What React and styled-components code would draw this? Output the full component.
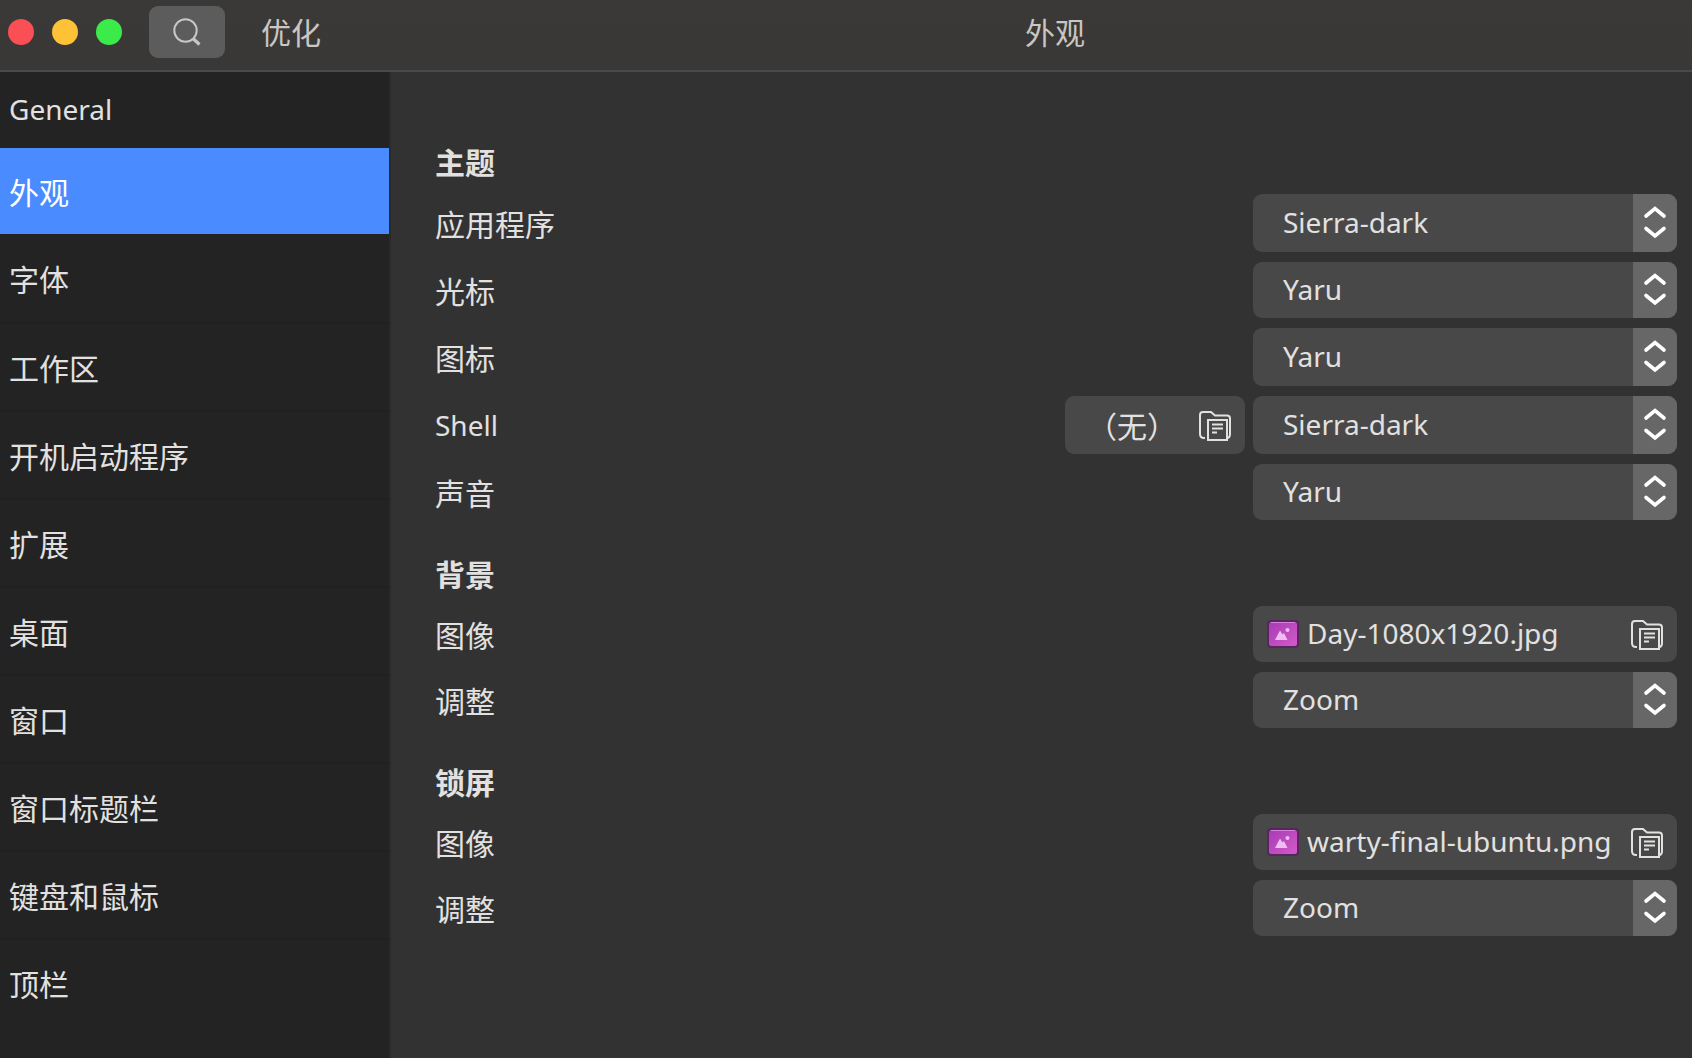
import React, { useId } from "react";
import styled, { createGlobalStyle } from "styled-components";

const latin = '"Noto Sans", "Noto Sans CJK SC", sans-serif';
const cjk = '"Noto Sans CJK SC", "Noto Sans", sans-serif';

const GlobalStyle = createGlobalStyle`
  *, *::before, *::after { box-sizing: border-box; }
  html, body { margin: 0; background: #323232; }
  body { color: #e2e1e0; font-family: ${cjk}; font-size: 30px; line-height: 46px; }
  button, select { font: inherit; color: inherit; margin: 0; border: 0; }
`;

const Window = styled.div`
  min-height: 100vh;
  display: flex;
  flex-direction: column;
`;

const HeaderBar = styled.header`
  display: flex;
  height: 72px;
  padding-bottom: 6px;
  border-bottom: 2px solid #494949;
  background: linear-gradient(#3b3938, #393837);
  color: #c9c6c3;
`;

const HeaderStart = styled.div`
  flex: none;
  width: 418px;
  display: flex;
  align-items: center;
  padding-left: 8px;
`;

const WindowControls = styled.div`
  display: flex;
  gap: 18px;
  margin-right: 27px;
`;

const Dot = styled.button`
  width: 26px;
  height: 26px;
  padding: 0;
  border-radius: 50%;
  background: ${(p) => p.$color};
`;

const SearchButton = styled.button`
  width: 76px;
  height: 52px;
  margin-right: 36px;
  padding: 0;
  display: grid;
  place-items: center;
  border-radius: 9px;
  background: #5d5c5c;
`;

const HeaderText = styled.h1`
  margin: 0;
  padding-bottom: 2px;
  font-size: 30px;
  font-weight: 400;
`;

const HeaderTitle = styled(HeaderText)`
  flex: 1;
  display: flex;
  align-items: center;
  justify-content: center;
`;

const Body = styled.div`
  flex: 1;
  display: flex;
`;

const Sidebar = styled.nav`
  flex: none;
  width: 391px;
  border-right: 2px solid #2a2a2a;
  background: #232323;
`;

const NavList = styled.ul`
  list-style: none;
  margin: 0;
  padding: 0;
`;

const NavLink = styled.a`
  display: flex;
  align-items: center;
  height: ${(p) => p.$height}px;
  padding: 0 9px ${(p) => (p.$latin ? 2 : 0)}px;
  border-top: ${(p) => (p.$divided ? "2px solid #202020" : "0")};
  background: ${(p) => (p.$active ? "#4a8cff" : "transparent")};
  color: ${(p) => (p.$active ? "#ffffff" : "inherit")};
  font-family: ${(p) => (p.$latin ? latin : cjk)};
  font-size: ${(p) => (p.$latin ? 28 : 30)}px;
  text-decoration: none;
`;

const Content = styled.main`
  flex: 1;
  min-width: 0;
  display: flex;
  flex-direction: column;
  gap: 30px;
  padding: 66px 15px 40px 44px;
`;

const GroupTitle = styled.h2`
  margin: 0 0 10px;
  font-size: 30px;
  font-weight: 700;
`;

const Rows = styled.div`
  display: grid;
  gap: 10px;
`;

const Row = styled.div`
  display: flex;
  align-items: stretch;
  gap: 8px;
  height: ${(p) => (p.$tall ? 58 : 56)}px;
`;

const RowLabel = styled.label`
  flex: 1;
  display: flex;
  align-items: center;
  font-family: ${(p) => (p.$latin ? latin : cjk)};
  font-size: ${(p) => (p.$latin ? 28 : 30)}px;
`;

const SelectBox = styled.div`
  width: 424px;
  display: grid;
  grid-template-columns: 1fr 44px;
  border-radius: 9px;
  overflow: hidden;
  background: #484848;
`;

const Select = styled.select`
  grid-area: 1 / 1 / 2 / 3;
  appearance: none;
  padding: 0 60px 2px 30px;
  background: transparent;
  font-family: ${latin};
  font-size: 28px;
`;

const Stepper = styled.span`
  grid-area: 1 / 2 / 2 / 3;
  display: grid;
  place-items: center;
  background: #676767;
  pointer-events: none;
`;

const FileButton = styled.button`
  width: ${(p) => (p.$compact ? 180 : 424)}px;
  display: flex;
  align-items: center;
  gap: 8px;
  padding: 0 14px 0 ${(p) => (p.$compact ? 22 : 14)}px;
  border-radius: 9px;
  background: #484848;
  text-align: left;
`;

const FileName = styled.span`
  flex: 1;
  padding-bottom: ${(p) => (p.$latin ? 2 : 0)}px;
  white-space: nowrap;
  font-family: ${(p) => (p.$latin ? latin : cjk)};
  font-size: ${(p) => (p.$latin ? 28 : 30)}px;
`;

const Glyph = styled.svg`
  flex: none;
  display: block;
`;

const SearchIcon = () => (
  <Glyph width="28" height="28" viewBox="0 0 28 28" fill="none" stroke="#c9c6c3">
    <circle cx="12.5" cy="12.5" r="11.2" strokeWidth="2" />
    <path d="M20 20.5L26.5 26.5" strokeWidth="3.2" />
  </Glyph>
);

const ChevronsIcon = () => (
  <Glyph width="24" height="34" viewBox="0 0 24 34" fill="none" stroke="#fff" strokeWidth="3.6" strokeLinecap="round">
    <path d="M3 10L12 2.5L21 10" />
    <path d="M3 22.5L12 30L21 22.5" />
  </Glyph>
);

const FolderIcon = () => (
  <Glyph width="32" height="32" viewBox="0 0 32 32" fill="none" stroke="#e2e1e0" strokeWidth="2">
    <path d="M6 29H5Q1 29 1 25V6Q1 3 4 3H12L16 6.500H28Q31 6.500 31 9.500V25Q31 29 28 29" />
    <path d="M9 11H28V31H9Z" />
    <path d="M13 15.500H24M13 19.500H24M13 23.500H18" />
  </Glyph>
);

const ImageIcon = () => (
  <Glyph width="32" height="30" viewBox="0 0 32 30">
    <defs>
      <linearGradient id="picture-fill" x1="0" y1="0" x2="1" y2="1">
        <stop offset="0" stopColor="#a63bb5" />
        <stop offset="1" stopColor="#d45ac9" />
      </linearGradient>
    </defs>
    <rect x="0" y="1" width="32" height="28" rx="4" fill="#56265c" />
    <rect x="2" y="3" width="28" height="24" rx="2.500" fill="url(#picture-fill)" />
    <path d="M4 3.500H28" stroke="#d583dc" />
    <path d="M8 21L13 11.500L15.500 15.500L17 14L20.500 21Z" fill="#efbdf0" />
    <circle cx="20.500" cy="11" r="2" fill="#efbdf0" />
  </Glyph>
);

const navItems = [
  { text: "General", height: 76, latin: true },
  { text: "外观", height: 86, active: true },
  { text: "字体", first: true },
  { text: "工作区" },
  { text: "开机启动程序" },
  { text: "扩展" },
  { text: "桌面" },
  { text: "窗口" },
  { text: "窗口标题栏" },
  { text: "键盘和鼠标" },
  { text: "顶栏" },
];

const groups = [
  {
    title: "主题",
    rows: [
      { label: "应用程序", value: "Sierra-dark", tall: true },
      { label: "光标", value: "Yaru" },
      { label: "图标", value: "Yaru", tall: true },
      { label: "Shell", value: "Sierra-dark", tall: true, latin: true, picker: "（无）" },
      { label: "声音", value: "Yaru" },
    ],
  },
  {
    title: "背景",
    rows: [
      { label: "图像", file: "Day-1080x1920.jpg" },
      { label: "调整", value: "Zoom" },
    ],
  },
  {
    title: "锁屏",
    rows: [
      { label: "图像", file: "warty-final-ubuntu.png" },
      { label: "调整", value: "Zoom" },
    ],
  },
];

function SettingRow({ row }) {
  const id = useId();
  return (
    <Row $tall={row.tall}>
      <RowLabel htmlFor={id} $latin={row.latin}>{row.label}</RowLabel>
      {row.picker && (
        <FileButton type="button" $compact>
          <FileName>{row.picker}</FileName>
          <FolderIcon />
        </FileButton>
      )}
      {row.file ? (
        <FileButton type="button" id={id}>
          <ImageIcon />
          <FileName $latin>{row.file}</FileName>
          <FolderIcon />
        </FileButton>
      ) : (
        <SelectBox>
          <Stepper><ChevronsIcon /></Stepper>
          <Select id={id} defaultValue={row.value}>
            <option>{row.value}</option>
          </Select>
        </SelectBox>
      )}
    </Row>
  );
}

export default function App() {
  return (
    <Window>
      <GlobalStyle />
      <HeaderBar>
        <HeaderStart>
          <WindowControls>
            <Dot type="button" aria-label="关闭" $color="#f94f55" />
            <Dot type="button" aria-label="最小化" $color="#fdc236" />
            <Dot type="button" aria-label="最大化" $color="#3aeb49" />
          </WindowControls>
          <SearchButton type="button" aria-label="搜索"><SearchIcon /></SearchButton>
          <HeaderText>优化</HeaderText>
        </HeaderStart>
        <HeaderTitle as="h2">外观</HeaderTitle>
      </HeaderBar>
      <Body>
        <Sidebar>
          <NavList>
            {navItems.map((item) => (
              <li key={item.text}>
                <NavLink
                  href="#"
                  $height={item.height || 88}
                  $latin={item.latin}
                  $active={item.active}
                  $divided={!item.height && !item.first}
                >
                  {item.text}
                </NavLink>
              </li>
            ))}
          </NavList>
        </Sidebar>
        <Content>
          {groups.map((group) => (
            <section key={group.title}>
              <GroupTitle>{group.title}</GroupTitle>
              <Rows>
                {group.rows.map((row) => (
                  <SettingRow key={row.label} row={row} />
                ))}
              </Rows>
            </section>
          ))}
        </Content>
      </Body>
    </Window>
  );
}
